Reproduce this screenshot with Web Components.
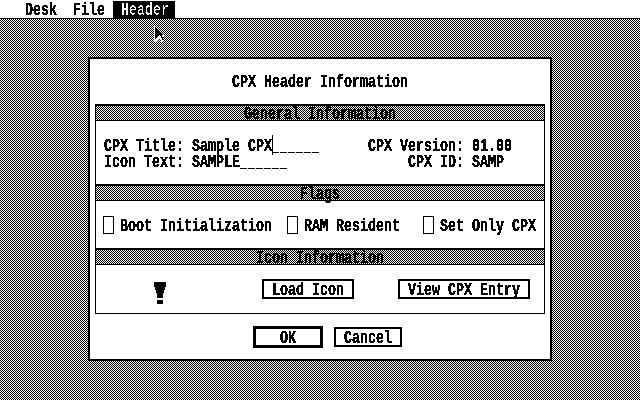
<!DOCTYPE html>
<html>
<head>
<meta charset="utf-8">
<title>CPX Header Information</title>
<style>
  html { background: #fff; }
  body { margin: 0; width: 640px; height: 400px; overflow: hidden; background: #fff; filter: url(#mono); }
</style>
</head>
<body>
<svg width="0" height="0" style="position:absolute">
  <filter id="mono" x="0" y="0" width="100%" height="100%" color-interpolation-filters="sRGB">
    <feColorMatrix type="saturate" values="0"/>
    <feComponentTransfer>
      <feFuncR type="discrete" tableValues="0 0 0 1"/>
      <feFuncG type="discrete" tableValues="0 0 0 1"/>
      <feFuncB type="discrete" tableValues="0 0 0 1"/>
    </feComponentTransfer>
  </filter>
</svg>

<tos-desktop>
  <tos-menu slot="menu">
    <tos-menu-item>Desk</tos-menu-item>
    <tos-menu-item>File</tos-menu-item>
    <tos-menu-item active>Header</tos-menu-item>
  </tos-menu>
  <tos-dialog heading="CPX Header Information">
    <tos-panel>
      <tos-section heading="General Information" style="--body-height:63px">
        <tos-info></tos-info>
      </tos-section>
      <tos-section heading="Flags" style="--body-height:47px">
        <tos-flags></tos-flags>
      </tos-section>
      <tos-section heading="Icon Information" style="--body-height:48px">
        <tos-icon-row></tos-icon-row>
      </tos-section>
    </tos-panel>
    <tos-actions></tos-actions>
  </tos-dialog>
</tos-desktop>

<script>
// system font look: 8px cell, stretched to the tall Atari glyph
class TosText extends HTMLElement {
    constructor() {
        super();
        this.attachShadow({ mode: 'open' });
        this.shadowRoot.innerHTML = `
      <style>
        :host {
          display: block;
          font: bold 13.34px/16px "Liberation Mono", monospace;
          transform: translateY(2px) scaleY(1.34);
          transform-origin: center;
        }
        span { white-space: pre; }
      </style>
      <span><slot></slot></span>
    `;
    }
}

// editable field: the blanks are drawn as separate dashes like the system font
class TosField extends HTMLElement {
    constructor() {
        super();
        this.attachShadow({ mode: 'open' });
        this.shadowRoot.innerHTML = `
      <style>
        :host { display: block; position: relative; }
        .blank {
          font: bold 12.6px "Liberation Sans", sans-serif;
          letter-spacing: 1px;
        }
        .caret {
          position: absolute;
          top: -2px;
          width: 1px;
          height: 20px;
          background: #000;
        }
      </style>
      <tos-text><slot></slot><span class="blank"></span></tos-text>
      <span class="caret" hidden></span>
    `;
    }

    connectedCallback() {
        this.shadowRoot.querySelector('.blank').textContent = '_'.repeat(+this.getAttribute('blanks'));
        if (this.hasAttribute('caret')) {
            const caret = this.shadowRoot.querySelector('.caret');
            caret.hidden = false;
            caret.style.left = this.getAttribute('caret') + 'px';
        }
    }
}

class TosMenuItem extends HTMLElement {
    constructor() {
        super();
        this.attachShadow({ mode: 'open' });
        this.shadowRoot.innerHTML = `
      <style>
        :host {
          display: block;
          height: 17px;
          margin-top: 1px;
          padding: 0 8px;
        }
        :host([active]) {
          background: #000;
          color: #fff;
          padding-right: 6px;
        }
      </style>
      <tos-text><slot></slot></tos-text>
    `;
    }
}

class TosMenu extends HTMLElement {
    constructor() {
        super();
        this.attachShadow({ mode: 'open' });
        this.shadowRoot.innerHTML = `
      <style>
        :host {
          display: flex;
          height: 18px;
          padding-left: 17px;
          background: #fff;
          border-bottom: 1px solid #000;
        }
      </style>
      <slot></slot>
    `;
    }
}

class TosDesktop extends HTMLElement {
    constructor() {
        super();
        this.attachShadow({ mode: 'open' });
        this.shadowRoot.innerHTML = `
      <style>
        :host {
          display: block;
          position: relative;
          width: 640px;
          height: 400px;
          overflow: hidden;
        }
        .desk {
          box-sizing: border-box;
          height: 381px;
          padding: 38px 88px 0;
          background-color: #fff;
          background-image: conic-gradient(#000 25%, #fff 0 50%, #000 0 75%, #fff 0);
          background-size: 2px 2px;
        }
        .cursor { position: absolute; left: 154px; top: 26px; overflow: visible; }
        .cursor path { shape-rendering: crispEdges; }
      </style>
      <slot name="menu"></slot>
      <div class="desk"><slot></slot></div>
      <svg class="cursor" width="14" height="19" viewBox="-1 -1 14 19">
        <path fill="#fff" d="M-1-1h2v1h1v1h1v1h1v1h1v1h1v1h1v1h1v1h1v3h-2v2h1v3H6v-2H5v-2H4v1H3v1H2v1H1v1H-1z"/>
        <path fill="#000" d="M0 0h1v1h1v1h1v1h1v1h1v1h1v1h1v1h1v1H7v2h1v2h1v1H7v-2H6v-2H5v-1H4v1H3v1H2v1H1v1H0z"/>
      </svg>
    `;
    }
}

class TosDialog extends HTMLElement {
    static get observedAttributes() {
        return ['heading'];
    }

    constructor() {
        super();
        this.attachShadow({ mode: 'open' });
        this.shadowRoot.innerHTML = `
      <style>
        :host {
          display: block;
          box-sizing: border-box;
          width: 464px;
          height: 304px;
          padding: 14px 5px 0;
          background: #fff;
          border: 2px solid #000;
        }
        tos-text { text-align: center; margin-bottom: 15px; }
      </style>
      <tos-text id="heading"></tos-text>
      <slot></slot>
    `;
    }

    attributeChangedCallback(name, oldValue, newValue) {
        this.shadowRoot.querySelector('#heading').textContent = newValue;
    }
}

class TosPanel extends HTMLElement {
    constructor() {
        super();
        this.attachShadow({ mode: 'open' });
        this.shadowRoot.innerHTML = `
      <style>
        :host {
          display: block;
          border: solid #000;
          border-width: 0 1px 1px;
        }
      </style>
      <slot></slot>
    `;
    }
}

class TosSection extends HTMLElement {
    static get observedAttributes() {
        return ['heading'];
    }

    constructor() {
        super();
        this.attachShadow({ mode: 'open' });
        this.shadowRoot.innerHTML = `
      <style>
        :host { display: block; }
        .bar {
          display: flex;
          align-items: center;
          justify-content: center;
          height: 14px;
          border-top: 2px solid #000;
          border-bottom: 1px solid #000;
          background-color: #fff;
          background-image: conic-gradient(#000 25%, #fff 0 50%, #000 0 75%, #fff 0);
          background-size: 2px 2px;
          background-position: 1px 0;
        }
        .body { height: var(--body-height); }
      </style>
      <div class="bar"><tos-text id="heading"></tos-text></div>
      <div class="body"><slot></slot></div>
    `;
    }

    attributeChangedCallback(name, oldValue, newValue) {
        this.shadowRoot.querySelector('#heading').textContent = newValue;
    }
}

class TosInfo extends HTMLElement {
    constructor() {
        super();
        this.attachShadow({ mode: 'open' });
        this.shadowRoot.innerHTML = `
      <style>
        :host {
          display: grid;
          grid-template-columns: 264px auto;
          padding: 16px 0 0 8px;
        }
      </style>
      <tos-field blanks="6" caret="168">CPX Title: Sample CPX</tos-field>
      <tos-text>CPX Version: 01.00</tos-text>
      <tos-field blanks="6">Icon Text: SAMPLE</tos-field>
      <tos-text>     CPX ID: SAMP</tos-text>
    `;
    }
}

class TosCheckbox extends HTMLElement {
    constructor() {
        super();
        this.attachShadow({ mode: 'open' });
        this.shadowRoot.innerHTML = `
      <style>
        :host {
          display: flex;
          align-items: center;
          gap: 6px;
        }
        .box {
          box-sizing: border-box;
          width: 11px;
          height: 18px;
          border: 1px solid #000;
        }
      </style>
      <span class="box"></span>
      <tos-text><slot></slot></tos-text>
    `;
    }
}

class TosFlags extends HTMLElement {
    constructor() {
        super();
        this.attachShadow({ mode: 'open' });
        this.shadowRoot.innerHTML = `
      <style>
        :host {
          display: flex;
          align-items: center;
          height: 100%;
          padding-left: 7px;
        }
        tos-checkbox:nth-child(3) { margin-left: 15px; }
        tos-checkbox:nth-child(4) { margin-left: 23px; }
      </style>
      <tos-checkbox>Boot Initialization</tos-checkbox>
      <tos-checkbox>RAM Resident</tos-checkbox>
      <tos-checkbox>Set Only CPX</tos-checkbox>
    `;
    }
}

class TosButton extends HTMLElement {
    constructor() {
        super();
        this.attachShadow({ mode: 'open' });
        this.shadowRoot.innerHTML = `
      <style>
        :host {
          display: flex;
          box-sizing: border-box;
          align-items: center;
          justify-content: center;
          height: 20px;
          border: 2px solid #000;
          background: #fff;
        }
        :host([default]) {
          height: 22px;
          border-width: 3px;
        }
      </style>
      <tos-text><slot></slot></tos-text>
    `;
    }
}

class TosIconRow extends HTMLElement {
    constructor() {
        super();
        this.attachShadow({ mode: 'open' });
        this.shadowRoot.innerHTML = `
      <style>
        :host {
          display: flex;
          align-items: flex-start;
          padding: 14px 0 0 58px;
        }
        svg { display: block; flex: none; margin: 3px 96px 0 0; }
        .load { width: 92px; }
        .view { width: 132px; margin-left: 44px; }
      </style>
      <svg width="12" height="22" viewBox="0 0 12 22" shape-rendering="crispEdges">
        <path fill="#000" d="M0 0H12V5H11V8H10V11H9V16H3V11H2V8H1V5H0Z"/>
        <path fill="#000" d="M3 18H9V22H3Z"/>
      </svg>
      <tos-button class="load">Load Icon</tos-button>
      <tos-button class="view">View CPX Entry</tos-button>
    `;
    }
}

class TosActions extends HTMLElement {
    constructor() {
        super();
        this.attachShadow({ mode: 'open' });
        this.shadowRoot.innerHTML = `
      <style>
        :host {
          display: flex;
          align-items: center;
          padding: 12px 0 0 158px;
        }
        .ok { width: 70px; }
        .cancel { width: 68px; margin-left: 11px; }
      </style>
      <tos-button class="ok" default>OK</tos-button>
      <tos-button class="cancel">Cancel</tos-button>
    `;
    }
}

customElements.define('tos-text', TosText);
customElements.define('tos-field', TosField);
customElements.define('tos-menu-item', TosMenuItem);
customElements.define('tos-menu', TosMenu);
customElements.define('tos-desktop', TosDesktop);
customElements.define('tos-dialog', TosDialog);
customElements.define('tos-panel', TosPanel);
customElements.define('tos-section', TosSection);
customElements.define('tos-info', TosInfo);
customElements.define('tos-checkbox', TosCheckbox);
customElements.define('tos-flags', TosFlags);
customElements.define('tos-button', TosButton);
customElements.define('tos-icon-row', TosIconRow);
customElements.define('tos-actions', TosActions);
</script>
</body>
</html>
